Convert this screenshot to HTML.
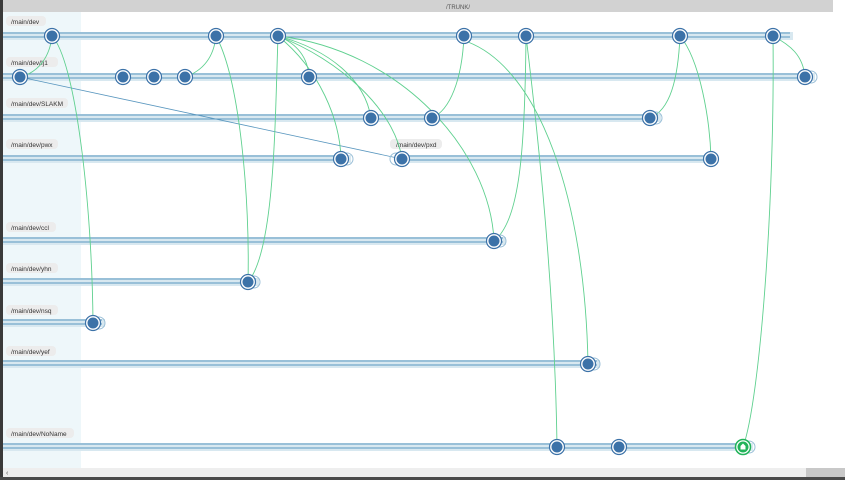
<!DOCTYPE html>
<html><head><style>
html,body{margin:0;padding:0;background:#fff;width:845px;height:480px;overflow:hidden;font-family:"Liberation Sans",sans-serif}
</style></head><body>
<svg width="845" height="480" xmlns="http://www.w3.org/2000/svg" style="position:absolute;left:0;top:0">
<rect x="0" y="0" width="845" height="480" fill="#fff"/>
<rect x="0" y="0" width="3" height="480" fill="#3a3a3a"/>
<rect x="3" y="0" width="830" height="12" fill="#d2d2d2"/>
<text x="458" y="9" font-size="6" fill="#555" text-anchor="middle">/TRUNK/</text>
<rect x="3" y="12" width="78" height="456" fill="#eef7fa"/>
<rect x="3" y="468" width="842" height="9" fill="#eeeeee"/>
<rect x="806" y="468" width="39" height="9" fill="#c8c8c8"/>
<text x="6" y="475" font-size="7" fill="#555">‹</text>
<rect x="0" y="477" width="845" height="3" fill="#4a4a4a"/>

<g font-size="6.5" fill="#333">
<g id="labels">
<rect x="6" y="16" width="40" height="10" rx="4" fill="#ececec"/><text x="11" y="24">/main/dev</text>
<rect x="6" y="57" width="52" height="10" rx="4" fill="#ececec"/><text x="11" y="65">/main/dev/Ij1</text>
<rect x="6" y="98" width="62" height="10" rx="4" fill="#ececec"/><text x="11" y="106">/main/dev/SLAKM</text>
<rect x="6" y="139" width="52" height="10" rx="4" fill="#ececec"/><text x="11" y="147">/main/dev/pwx</text>
<rect x="390" y="139" width="52" height="10" rx="4" fill="#ececec"/><text x="396" y="147">/main/dev/pxd</text>
<rect x="6" y="222" width="50" height="10" rx="4" fill="#ececec"/><text x="11" y="230">/main/dev/ccl</text>
<rect x="6" y="263" width="52" height="10" rx="4" fill="#ececec"/><text x="11" y="271">/main/dev/yhn</text>
<rect x="6" y="305" width="52" height="10" rx="4" fill="#ececec"/><text x="11" y="313">/main/dev/nsq</text>
<rect x="6" y="346" width="50" height="10" rx="4" fill="#ececec"/><text x="11" y="354">/main/dev/yef</text>
<rect x="6" y="428" width="68" height="10" rx="4" fill="#ececec"/><text x="11" y="436">/main/dev/NoName</text>
</g></g>

<g id="bands">
<!-- band: light rect + two lines -->
<g fill="#d8e8f0" stroke="none">
<rect x="3" y="32" width="790" height="8"/>
<rect x="3" y="73" width="812" height="8"/>
<rect x="3" y="114" width="658" height="8"/>
<rect x="3" y="155" width="348" height="8"/>
<rect x="395" y="155" width="323" height="8"/>
<rect x="3" y="237" width="503" height="8"/>
<rect x="3" y="278" width="256" height="8"/>
<rect x="3" y="319" width="102" height="8"/>
<rect x="3" y="360" width="597" height="8"/>
<rect x="3" y="443" width="750" height="8"/>
</g>
<g stroke="#5a97bf" stroke-width="1">
<line x1="3" y1="33" x2="790" y2="33"/><line x1="3" y1="37" x2="790" y2="37"/>
<line x1="3" y1="74" x2="812" y2="74"/><line x1="3" y1="78" x2="812" y2="78"/>
<line x1="3" y1="115" x2="658" y2="115"/><line x1="3" y1="119" x2="658" y2="119"/>
<line x1="3" y1="156" x2="348" y2="156"/><line x1="3" y1="160" x2="348" y2="160"/>
<line x1="395" y1="156" x2="718" y2="156"/><line x1="395" y1="160" x2="718" y2="160"/>
<line x1="3" y1="238" x2="503" y2="238"/><line x1="3" y1="242" x2="503" y2="242"/>
<line x1="3" y1="279" x2="256" y2="279"/><line x1="3" y1="283" x2="256" y2="283"/>
<line x1="3" y1="320" x2="102" y2="320"/><line x1="3" y1="324" x2="102" y2="324"/>
<line x1="3" y1="361" x2="597" y2="361"/><line x1="3" y1="365" x2="597" y2="365"/>
<line x1="3" y1="444" x2="750" y2="444"/><line x1="3" y1="448" x2="750" y2="448"/>
</g>
</g>

<line x1="20" y1="77" x2="402" y2="159" stroke="#5a97bf" stroke-width="0.8"/>

<g fill="none" stroke="#5fd08f" stroke-width="0.9">
<path d="M52,36 C75,60 92,200 93,323"/>
<path d="M20,77 C40,72 50,55 52,36"/>
<path d="M185,77 C205,70 214,55 216,36"/>
<path d="M216,36 C240,80 250,200 248,282"/>
<path d="M278,36 C275,120 275,250 248,282"/>
<path d="M278,36 C300,45 308,60 309,77"/>
<path d="M278,36 C330,50 365,80 371,118"/>
<path d="M278,36 C320,70 340,120 341,159"/>
<path d="M278,36 C340,60 395,110 402,159"/>
<path d="M278,36 C400,50 490,150 494,241"/>
<path d="M464,36 C462,80 450,110 432,118"/>
<path d="M526,36 C525,150 520,220 494,241"/>
<path d="M526,36 C540,150 555,300 557,447"/>
<path d="M468,42 C540,70 585,200 588,364"/>
<path d="M680,36 C678,80 670,110 650,118"/>
<path d="M680,36 C700,60 710,120 711,159"/>
<path d="M773,36 C790,45 803,55 805,77"/>
<path d="M773,36 C775,200 760,400 743,447"/>
</g>

<g id="nodes">
<g fill="#3c72a8" stroke="#3c72a8">
<!-- ghost circles -->
</g>
<g fill="none" stroke="#9cc0d8" stroke-width="1">
<circle cx="347" cy="159" r="6"/><circle cx="500" cy="241" r="6"/><circle cx="254" cy="282" r="6"/><circle cx="99" cy="323" r="6"/><circle cx="594" cy="364" r="6"/><circle cx="811" cy="77" r="6"/><circle cx="656" cy="118" r="6"/><circle cx="749" cy="447" r="6"/><circle cx="396" cy="159" r="6"/>
</g>
<g fill="#fff" stroke="#3c72a8" stroke-width="1.2">
<circle cx="52" cy="36" r="7.5"/><circle cx="216" cy="36" r="7.5"/><circle cx="278" cy="36" r="7.5"/><circle cx="464" cy="36" r="7.5"/><circle cx="526" cy="36" r="7.5"/><circle cx="680" cy="36" r="7.5"/><circle cx="773" cy="36" r="7.5"/>
<circle cx="20" cy="77" r="7.5"/><circle cx="123" cy="77" r="7.5"/><circle cx="154" cy="77" r="7.5"/><circle cx="185" cy="77" r="7.5"/><circle cx="309" cy="77" r="7.5"/><circle cx="805" cy="77" r="7.5"/>
<circle cx="371" cy="118" r="7.5"/><circle cx="432" cy="118" r="7.5"/><circle cx="650" cy="118" r="7.5"/>
<circle cx="341" cy="159" r="7.5"/><circle cx="402" cy="159" r="7.5"/><circle cx="711" cy="159" r="7.5"/>
<circle cx="494" cy="241" r="7.5"/><circle cx="248" cy="282" r="7.5"/><circle cx="93" cy="323" r="7.5"/><circle cx="588" cy="364" r="7.5"/>
<circle cx="557" cy="447" r="7.5"/><circle cx="619" cy="447" r="7.5"/>
</g>
<g fill="#3c72a8">
<circle cx="52" cy="36" r="5.5"/><circle cx="216" cy="36" r="5.5"/><circle cx="278" cy="36" r="5.5"/><circle cx="464" cy="36" r="5.5"/><circle cx="526" cy="36" r="5.5"/><circle cx="680" cy="36" r="5.5"/><circle cx="773" cy="36" r="5.5"/>
<circle cx="20" cy="77" r="5.5"/><circle cx="123" cy="77" r="5.5"/><circle cx="154" cy="77" r="5.5"/><circle cx="185" cy="77" r="5.5"/><circle cx="309" cy="77" r="5.5"/><circle cx="805" cy="77" r="5.5"/>
<circle cx="371" cy="118" r="5.5"/><circle cx="432" cy="118" r="5.5"/><circle cx="650" cy="118" r="5.5"/>
<circle cx="341" cy="159" r="5.5"/><circle cx="402" cy="159" r="5.5"/><circle cx="711" cy="159" r="5.5"/>
<circle cx="494" cy="241" r="5.5"/><circle cx="248" cy="282" r="5.5"/><circle cx="93" cy="323" r="5.5"/><circle cx="588" cy="364" r="5.5"/>
<circle cx="557" cy="447" r="5.5"/><circle cx="619" cy="447" r="5.5"/>
</g>
<circle cx="743" cy="447" r="7.5" fill="#fff" stroke="#22b35a" stroke-width="1.5"/>
<circle cx="743" cy="447" r="5.5" fill="#22b35a"/>
<path d="M740.5,449.5 V446 L743,443.5 L745.5,446 V449.5 Z" fill="#fff"/>
</g>
</svg>
</body></html>
